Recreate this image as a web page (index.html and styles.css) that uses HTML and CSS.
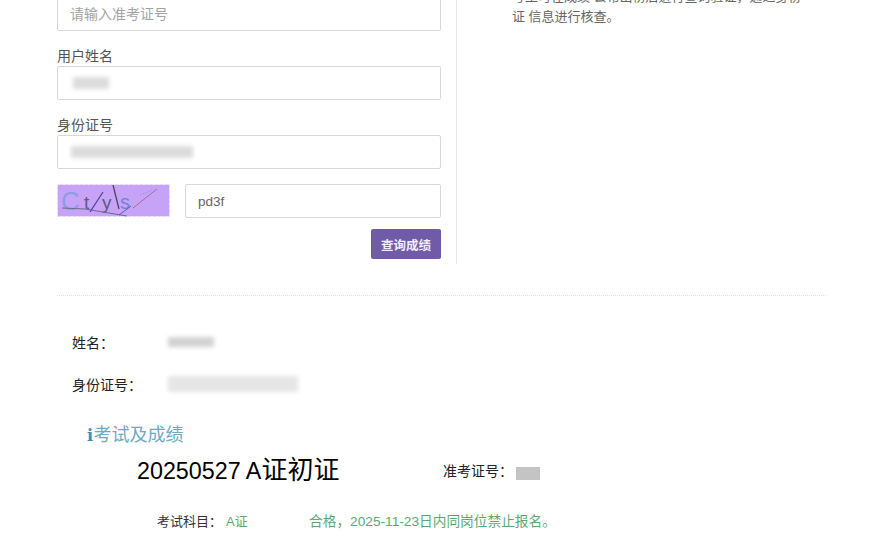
FILE: index.html
```html
<!DOCTYPE html>
<html lang="en">
<head>
    <meta charset="UTF-8">
    <title>成绩查询</title>
    <link rel="stylesheet" href="styles.css">
</head>
<body>
    <div class="container">
        <div class="query">
            <form class="query-form">
                <input class="input" type="text" placeholder="请输入准考证号">
                <label class="label">用户姓名</label>
                <div class="input-box">
                    <span class="smudge smudge-name"></span>
                </div>
                <label class="label">身份证号</label>
                <div class="input-box">
                    <span class="smudge smudge-id"></span>
                </div>
                <div class="captcha-row">
                    <svg class="captcha" width="113" height="33" viewBox="0 0 113 33">
                        <rect x="0.5" y="0.5" width="112" height="32" fill="#c7a3f7" stroke="#f0e6fd" stroke-dasharray="3 2"/>
                        <text x="4" y="26" class="captcha-c">C</text>
                        <text x="27" y="25" class="captcha-t">t</text>
                        <text x="45" y="25" class="captcha-y">y</text>
                        <text x="63" y="25" class="captcha-s">s</text>
                        <path d="M5 24 L28 25 L70 32" stroke="#6d6a8c" fill="none"/>
                        <path d="M46 8 L33 28" stroke="#4f3b9c" stroke-width="1.2"/>
                        <path d="M56 1 L62 25" stroke="#4b4366" stroke-width="1.3"/>
                        <path d="M62 31 L74 22" stroke="#6a4fc0"/>
                        <path d="M76 24 L100 5" stroke="#a0709a"/>
                        <path d="M83 11 L95 6" stroke="#8f9be0" stroke-dasharray="2 1"/>
                    </svg>
                    <input class="input input-code" type="text" value="pd3f">
                </div>
                <div class="actions">
                    <button class="submit" type="button">查询成绩</button>
                </div>
            </form>
            <div class="notes">
                <p>考生可在成绩 公布出榜后进行查询验证，通过身份证 信息进行核查。</p>
            </div>
        </div>

        <div class="dots"></div>

        <div class="person">
            <div class="person-row">
                <span class="person-key">姓名：</span>
                <span class="smudge smudge-person-name"></span>
            </div>
            <div class="person-row">
                <span class="person-key">身份证号：</span>
                <span class="smudge smudge-person-id"></span>
            </div>
        </div>

        <h3 class="section-title"><span class="info-icon">i</span>考试及成绩</h3>

        <div class="exam-head">
            <h2 class="exam-name">20250527 A<span class="exam-name-cn">证初证</span></h2>
            <span class="exam-ticket">准考证号：</span>
            <span class="ticket-mask"></span>
        </div>
        <div class="exam-result">
            <span class="result-key">考试科目：</span>
            <span class="result-subject">A证</span>
            <span class="result-text">合格，2025-11-23日内同岗位禁止报名。</span>
        </div>
    </div>
</body>
</html>
```

FILE: styles.css
```css
html, body {
    height: 554px;
    overflow: hidden;
}
body {
    margin: 0;
    background-color: #fff;
    font-family: "Liberation Sans", "Noto Sans CJK SC", sans-serif;
    color: #333;
    font-size: 14px;
}
.container {
    margin-top: -3px;
    padding: 0 66px 0 57px;
}
.query {
    display: flex;
    height: 267px;
}
.query-form {
    width: 384px;
    padding-right: 15px;
    border-right: 1px solid #e6e6e6;
}
.input, .input-box {
    display: block;
    box-sizing: border-box;
    width: 100%;
    height: 34px;
    margin: 0;
    padding: 0 12px;
    border: 1px solid #d8d8d8;
    border-radius: 2px;
    background-color: #fff;
    font-family: "Liberation Sans", "Noto Sans CJK SC", sans-serif;
    font-size: 14px;
    color: #666;
}
.input::placeholder {
    color: #a3a3a3;
}
.input-code {
    font-size: 13.5px;
}
.input-box {
    display: flex;
    align-items: center;
}
.label {
    display: block;
    height: 20px;
    margin-top: 15px;
    line-height: 20px;
    font-size: 14px;
    color: #555;
}
.smudge {
    display: block;
    background-color: #dcdcdc;
    filter: blur(2px);
}
.smudge-name {
    width: 36px;
    height: 12px;
    margin-left: 3px;
}
.smudge-id {
    width: 122px;
    height: 12px;
    margin-left: 1px;
}
.captcha-row {
    display: flex;
    align-items: flex-start;
    gap: 15px;
    margin-top: 15px;
}
.captcha {
    flex: none;
    display: block;
}
.captcha-row .input {
    flex: 1;
    width: auto;
}
.captcha text {
    font-family: "Liberation Sans", sans-serif;
}
.captcha-c {
    font-size: 26px;
    fill: #8f9be4;
}
.captcha-t {
    font-size: 19px;
    fill: #5f5a80;
}
.captcha-y {
    font-size: 19px;
    fill: #5b5a85;
}
.captcha-s {
    font-size: 20px;
    fill: #6f86d8;
}
.actions {
    display: flex;
    justify-content: flex-end;
    margin-top: 11px;
}
.submit {
    width: 70px;
    height: 30px;
    padding: 0;
    border: none;
    border-radius: 2px;
    background-color: #6f5ba7;
    color: #f1eef8;
    font-family: "Noto Sans CJK SC", sans-serif;
    font-size: 12.5px;
    font-weight: bold;
}
.notes {
    width: 296px;
    margin-left: 55px;
    margin-top: -10px;
}
.notes p {
    margin: 0;
    font-size: 13px;
    line-height: 20px;
    color: #666;
}
.dots {
    margin-top: 31px;
    border-top: 1px dotted #e4e4e4;
}
.person {
    padding: 36px 0 6px 15px;
}
.person-row {
    display: flex;
    align-items: center;
    height: 20px;
    margin-bottom: 22px;
    color: #222;
}
.person-key {
    width: 96px;
}
.smudge-person-name {
    width: 46px;
    height: 10px;
    background-color: #d2d2d2;
}
.smudge-person-id {
    width: 130px;
    height: 16px;
    background-color: #e6e6e6;
}
.section-title {
    margin: 0;
    padding-left: 30px;
    font-size: 18px;
    font-weight: normal;
    line-height: 26px;
    color: #6aabc6;
}
.info-icon {
    display: inline-block;
    width: 6.5px;
    font-family: "DejaVu Serif", serif;
    font-size: 16px;
    font-weight: bold;
    color: #3d8fb5;
}
.exam-head {
    display: flex;
    align-items: center;
    margin-top: 1px;
    padding-left: 80px;
    height: 34px;
}
.exam-name {
    width: 306px;
    margin: 0;
    font-size: 23.3px;
    font-weight: normal;
    color: #000;
}
.exam-name-cn {
    font-size: 26px;
}
.exam-ticket {
    width: 73px;
    margin-top: 6px;
    color: #222;
}
.ticket-mask {
    width: 24px;
    height: 13px;
    margin-top: 12px;
    background-color: #c4c4c4;
}
.exam-result {
    display: flex;
    align-items: center;
    margin-top: 26px;
    padding-left: 100px;
    font-size: 13px;
    color: #333;
}
.result-key {
    width: 69px;
}
.result-subject {
    width: 83px;
    color: #5aaa70;
}
.result-text {
    font-size: 13.7px;
    color: #5aaa70;
}
```
